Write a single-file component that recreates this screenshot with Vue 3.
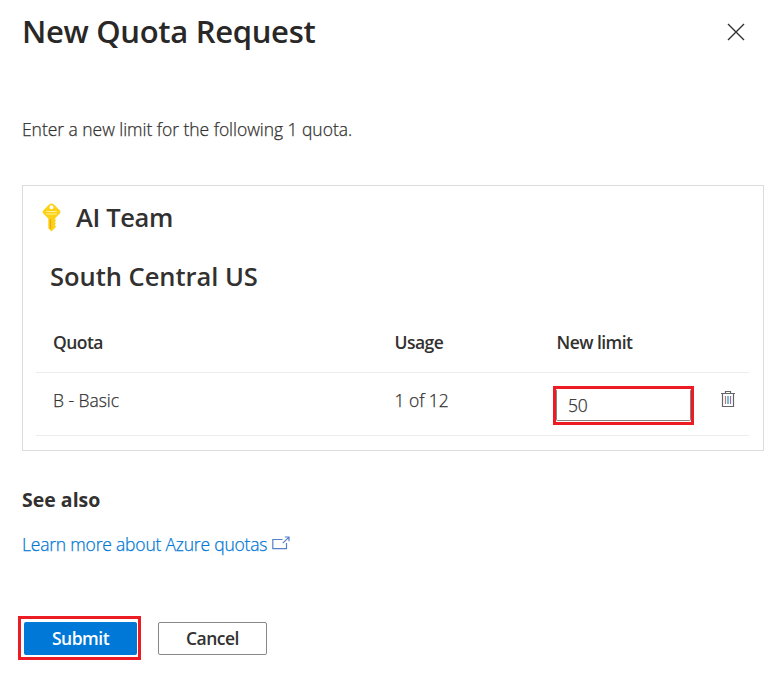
<script setup>
import { ref } from 'vue'

const limit = ref('50')
</script>

<template>
  <main class="panel">
    <header class="head">
      <h1>New Quota Request</h1>
      <button class="close" aria-label="Close">
        <svg width="18" height="18" viewBox="0 0 18 18"><path d="M1 1 17 17M17 1 1 17" fill="none" stroke="#323130" stroke-width="1.4" /></svg>
      </button>
    </header>
    <p class="intro light">Enter a new limit for the following 1 quota.</p>

    <section class="card">
      <div class="team">
        <svg class="key" width="19" height="29" viewBox="0 0 19 29">
          <path d="M9.5.5Q10.8.5 12 1.6L17.7 7.3Q19.2 9 17.7 10.7L13.3 15V17L14 18 12.7 19.3 14 20.7 12.7 22 14 23.4 12.9 25 9.5 28.5 6.3 25.3V15.4L1.4 10.7Q-.1 9 1.4 7.3L7.1 1.6Q8.2.5 9.5.5ZM9.5 2.2A2 2 0 0 0 9.5 6.2 2 2 0 0 0 9.5 2.2Z" fill="#fcd116" fill-rule="evenodd" />
          <path d="M4.3 8.5H14.8M4.3 11H14.8" stroke="#fff0a0" stroke-width="1.1" />
          <path d="M8.5 16V26" stroke="#e6ad10" stroke-width="1.3" />
        </svg>
        <h2>AI Team</h2>
      </div>
      <h2 class="region">South Central US</h2>
      <div class="table">
        <div class="row labels">
          <span>Quota</span><span>Usage</span><span>New limit</span>
        </div>
        <div class="row values light">
          <span>B - Basic</span><span>1 of 12</span>
          <div class="field"><input v-model="limit" aria-label="New limit" /></div>
          <button class="trash" aria-label="Delete">
            <svg width="14" height="18" viewBox="0 0 14 18" fill="none">
              <path d="M0 3.5H14M4.5 3V1.5H9.5V3M1.5 4V16.5H12.5V4" stroke="#65666b" stroke-width="1.2" />
              <path d="M4.5 6V14" stroke="#b77c68" stroke-width="1.2" /><path d="M7 6V14" stroke="#4b9bd2" stroke-width="1.4" /><path d="M9.5 6V14" stroke="#8c7894" stroke-width="1.2" />
            </svg>
          </button>
        </div>
      </div>
    </section>

    <h3>See also</h3>
    <a class="link light"><span>Learn more about Azure quotas</span>
      <svg width="18" height="15" viewBox="0 0 18 15" fill="none" stroke="#5580ca" stroke-width="1.2">
        <path d="M10.5 3.5H.8V12.6H14.5V7M10.8 7.2 16.7 1.3M12.8 1H17V5.2" />
      </svg>
    </a>
    <footer class="actions">
      <div class="outline"><button class="submit">Submit</button></div>
      <button class="cancel">Cancel</button>
    </footer>
  </main>
</template>

<style>
body { margin: 0; background: #fff; }
</style>

<style scoped>
* { box-sizing: border-box; }
.panel { width: 782px; height: 682px; padding: 0 18px 0 22px; color: #323130; font: 400 17.5px/24px "Open Sans", "Noto Sans", sans-serif; overflow: hidden; }
h1, h2, h3, p { margin: 0; }
button { padding: 0; border: 0; background: none; font: inherit; color: inherit; }
span { white-space: nowrap; }
.light { font-weight: 300; -webkit-text-stroke: .25px currentColor; }
.head { display: flex; justify-content: space-between; height: 64px; padding-right: 18px; align-items: center; }
h1 { font-size: 31px; line-height: 40px; font-weight: 600; color: #292827; letter-spacing: -.31px; padding-bottom: 2px; }
.close { width: 20px; height: 20px; display: grid; place-items: center; }
.intro { margin-top: 53px; height: 24px; letter-spacing: -.04px; }
.card { margin-top: 44px; height: 266px; border: 1px solid #dcdcdc; }
.team { display: flex; padding: 13px 0 0 19px; height: 50px; gap: 15px; }
.key { margin-top: 4px; }
h2 { font-size: 25.5px; line-height: 36px; font-weight: 600; }
.team h2 { letter-spacing: -.35px; }
.region { margin: 22px 0 0 27px; letter-spacing: -.03px; }
.table { margin: 32px 14px 0 13px; }
.row { display: grid; grid-template-columns: 341.5px 162px 163.5px 1fr; padding-left: 17px; border-bottom: 1px solid #ededed; }
.labels { height: 47px; padding-top: 4px; font-weight: 600; letter-spacing: -.55px; }
.values { height: 63px; padding-top: 15px; letter-spacing: -.05px; }
.field { width: 141px; height: 39px; margin: -2px 0 0 -3.5px; border: 3px solid #ed1c24; }
input { display: block; width: 135px; height: 32px; margin: 0; padding: 0 0 0 11px; border: 1px solid #858381; border-top-color: #fff; border-radius: 2px; font: inherit; letter-spacing: -.2px; color: inherit; outline: 0; background: #fff; }
.trash { width: 16px; height: 20px; margin-top: 1px; }
.trash svg { display: block; margin: 0 1px; }
h3 { margin-top: 36px; font-size: 19.5px; line-height: 26px; font-weight: 700; }
.link { margin-top: 19px; height: 24px; display: flex; gap: 5px; color: #0078d4; letter-spacing: -.2px; }
.link svg { margin-top: 4px; }
.actions { display: flex; gap: 17px; margin: 60px 0 0 -4px; font-weight: 600; letter-spacing: -.5px; }
.outline { width: 123px; height: 44px; padding: 3px; border: 3px solid #ed1c24; }
.submit { display: block; width: 113px; height: 33px; padding-bottom: 2px; border-radius: 2px; color: #fff; background: #0078d7; letter-spacing: inherit; }
.cancel { width: 109px; height: 33px; margin-top: 6px; padding-bottom: 2px; border: 1px solid #8a8886; border-radius: 2px; letter-spacing: inherit; }
</style>
